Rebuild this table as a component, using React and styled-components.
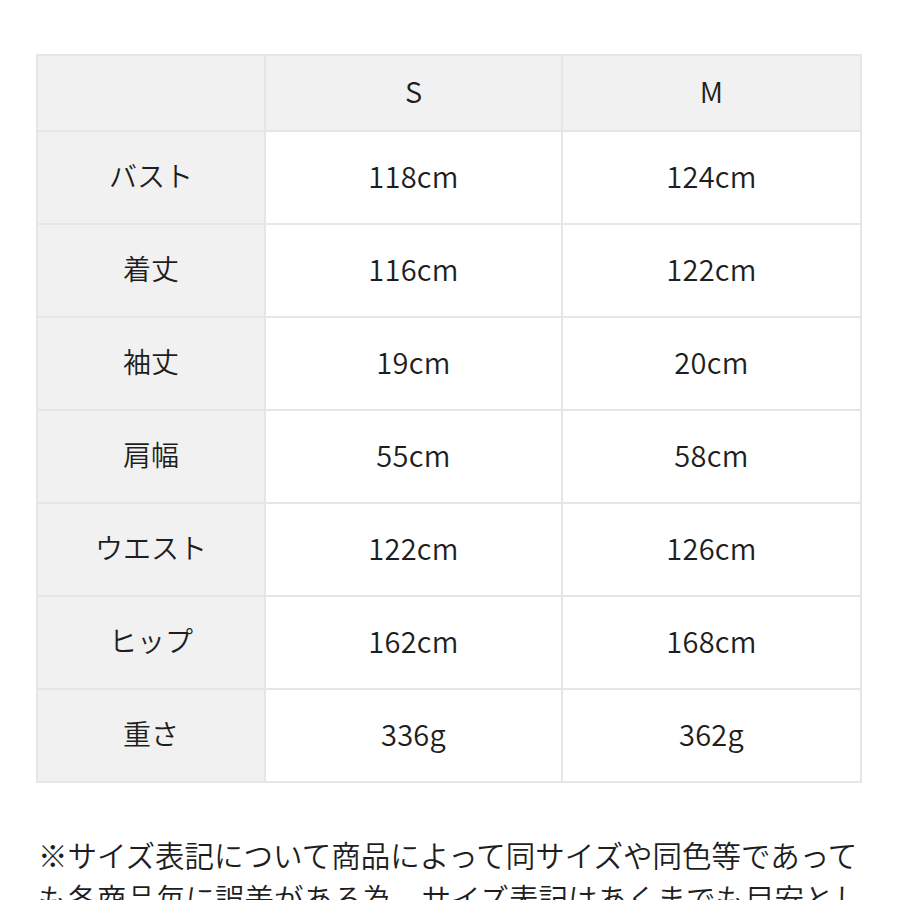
import React from 'react'
import styled, {createGlobalStyle} from 'styled-components'

const GlobalStyle = createGlobalStyle`
    html, body {
        margin: 0;
        padding: 0;
        background: #fff;
    }
    body {
        font-family: "Noto Sans CJK JP", "Noto Sans", sans-serif;
        color: #1e1e1e;
    }
`

const Page = styled.div`
    width: 900px;
    height: 900px;
    overflow: hidden;
    padding: 54px 40px 0 36px;
    box-sizing: border-box;
`

const SizeTable = styled.table`
    width: 824px;
    border-collapse: collapse;
    table-layout: fixed;
    border: 2px solid #e6e6e6;
`

const HeadCell = styled.th`
    height: 68px;
    background: #f1f1f1;
    border: 2px solid #e6e6e6;
    font-weight: 350;
    font-size: 29px;
    text-align: center;
    padding: 0 0 6px;
`

const LabelCell = styled.th`
    height: 85px;
    background: #f1f1f1;
    border: 2px solid #e6e6e6;
    font-weight: 350;
    font-size: 28px;
    text-align: center;
    padding: 0 0 6px;
`

const ValueCell = styled.td`
    height: 85px;
    background: #fff;
    border: 2px solid #e6e6e6;
    font-weight: 350;
    font-size: 29px;
    text-align: center;
    padding: 0 0 6px;
    letter-spacing: 0.3px;
`

const Note = styled.p`
    margin: 50px 0 0 2px;
    width: 830px;
    font-size: 29.5px;
    font-weight: 350;
    line-height: 43px;
    color: #1e1e1e;
`

const rows = [
    ['バスト', '118cm', '124cm'],
    ['着丈', '116cm', '122cm'],
    ['袖丈', '19cm', '20cm'],
    ['肩幅', '55cm', '58cm'],
    ['ウエスト', '122cm', '126cm'],
    ['ヒップ', '162cm', '168cm'],
    ['重さ', '336g', '362g'],
]

const App = () => {
    return (
        <>
            <GlobalStyle/>
            <Page>
                <SizeTable>
                    <colgroup>
                        <col style={{width: 228}}/>
                        <col style={{width: 297}}/>
                        <col style={{width: 299}}/>
                    </colgroup>
                    <thead>
                        <tr>
                            <HeadCell></HeadCell>
                            <HeadCell>S</HeadCell>
                            <HeadCell>M</HeadCell>
                        </tr>
                    </thead>
                    <tbody>
                        {rows.map(r => (
                            <tr key={r[0]}>
                                <LabelCell scope='row'>{r[0]}</LabelCell>
                                <ValueCell>{r[1]}</ValueCell>
                                <ValueCell>{r[2]}</ValueCell>
                            </tr>
                        ))}
                    </tbody>
                </SizeTable>
                <Note>
                    ※サイズ表記について商品によって同サイズや同色等であっても各商品毎に誤差がある為、サイズ表記はあくまでも目安としてご参考下さい。
                </Note>
            </Page>
        </>
    )
}

export default App
